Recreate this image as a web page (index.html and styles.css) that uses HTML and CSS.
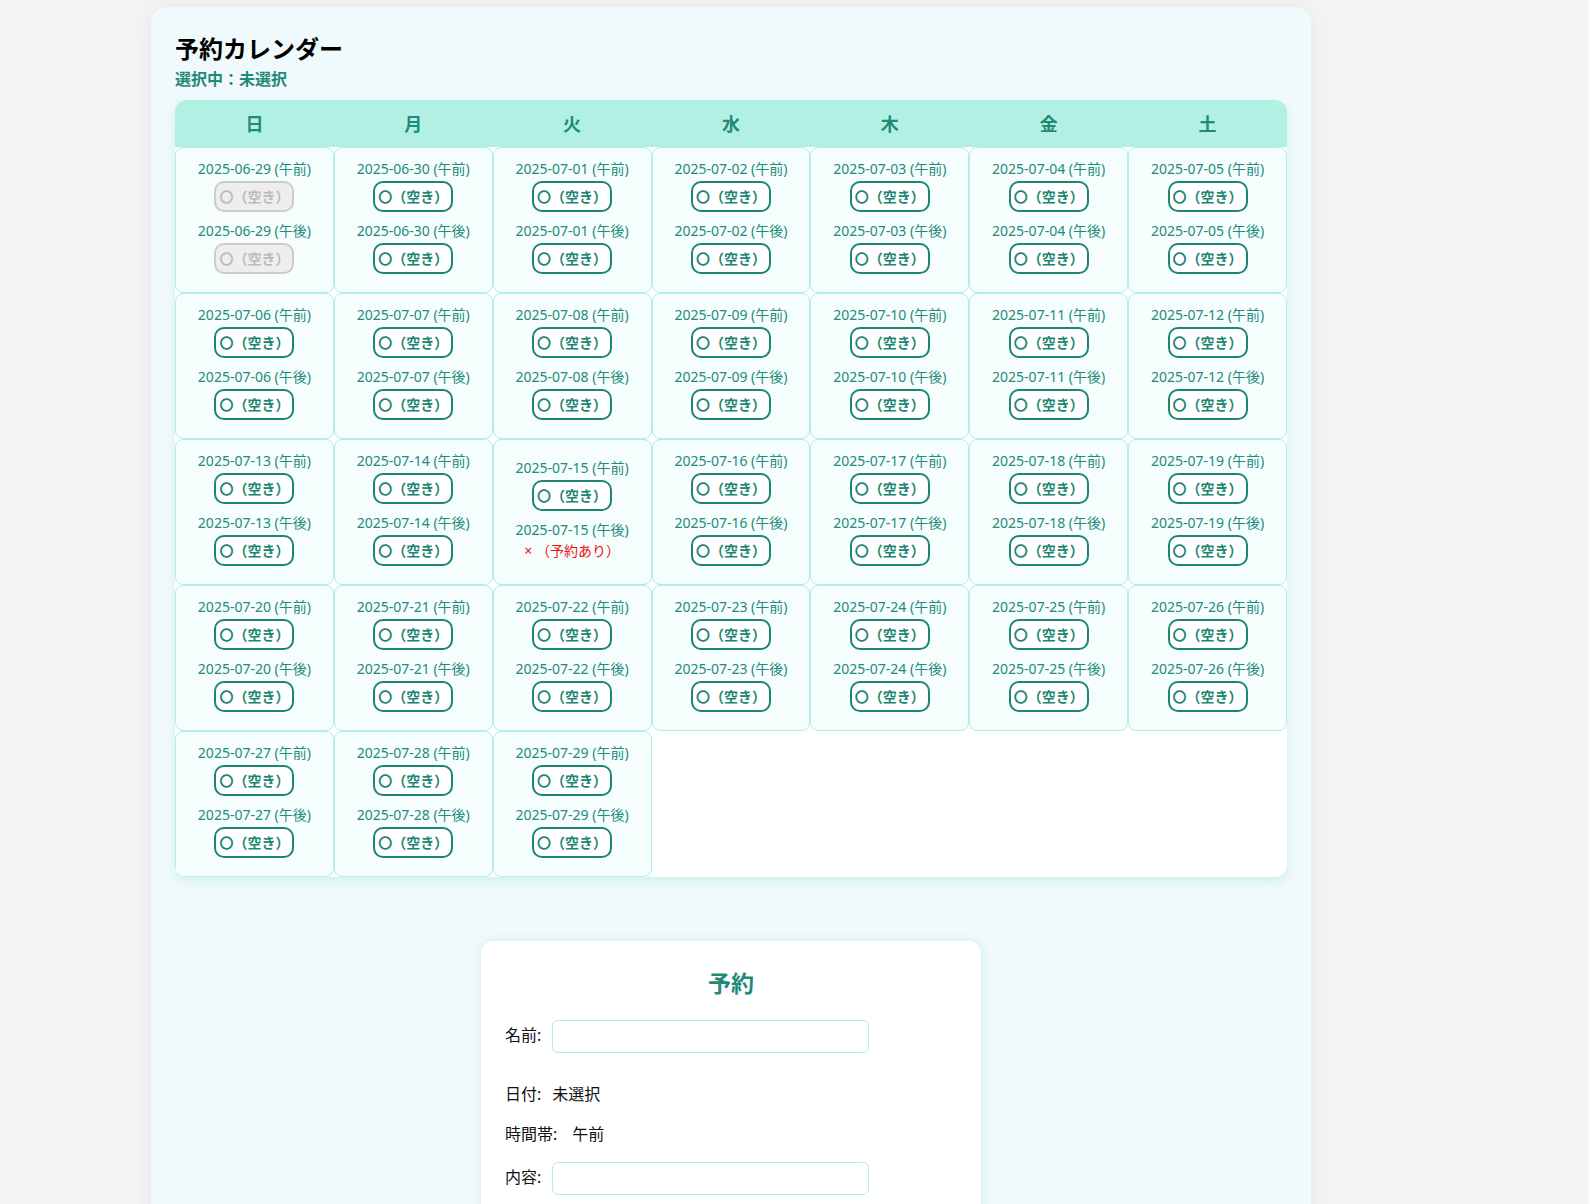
FILE: index.html
```html
<!DOCTYPE html>
<html lang="ja">
    <head>
        <meta charset="utf-8" />
        <title>予約カレンダー</title>
        <link rel="stylesheet" href="styles.css">
        <script type="text/javascript">
            var dayNames = ["日", "月", "火", "水", "木", "金", "土"];
            var bookedSlots = ["2025-07-15_午後"];
            var pastUntil = "2025-06-29";

            function pad(n) {
                return (n < 10 ? "0" : "") + n;
            }

            function formatDate(d) {
                return d.getFullYear() + "-" + pad(d.getMonth() + 1) + "-" + pad(d.getDate());
            }

            // Build one slot (date label + button or booked mark)
            function createSlot(dateStr, period) {
                var slot = document.createElement("div");
                slot.setAttribute("class", "slot");

                var label = document.createElement("div");
                label.setAttribute("class", "slotDate");
                label.appendChild(document.createTextNode(dateStr + " (" + period + ")"));
                slot.appendChild(label);

                if (bookedSlots.indexOf(dateStr + "_" + period) >= 0) {
                    var booked = document.createElement("div");
                    booked.setAttribute("class", "booked");
                    booked.appendChild(document.createTextNode("× （予約あり）"));
                    slot.appendChild(booked);
                } else {
                    var btn = document.createElement("button");
                    btn.setAttribute("type", "button");
                    btn.setAttribute("class", dateStr <= pastUntil ? "slotBtn disabled" : "slotBtn");
                    btn.appendChild(document.createTextNode("〇（空き）"));
                    slot.appendChild(btn);
                }
                return slot;
            }

            function buildCalendar() {
                var head = document.getElementById("calHead");
                var headRow = document.createElement("tr");
                for (var i = 0; i < dayNames.length; i++) {
                    var th = document.createElement("th");
                    th.appendChild(document.createTextNode(dayNames[i]));
                    headRow.appendChild(th);
                }
                head.appendChild(headRow);

                var body = document.getElementById("calBody");
                var day = new Date(2025, 5, 29);
                var row = null;
                for (var n = 0; n < 31; n++) {
                    if (n % 7 == 0) {
                        row = document.createElement("tr");
                        body.appendChild(row);
                    }
                    var dateStr = formatDate(day);
                    var td = document.createElement("td");
                    td.appendChild(createSlot(dateStr, "午前"));
                    td.appendChild(createSlot(dateStr, "午後"));
                    row.appendChild(td);
                    day.setDate(day.getDate() + 1);
                }
            }

            window.addEventListener("load", buildCalendar);
        </script>
    </head>
    <body>
        <div id="page">
            <h1 class="title">予約カレンダー</h1>
            <div class="selected">選択中：未選択</div>
            <table class="calendar">
                <thead id="calHead"></thead>
                <tbody id="calBody"></tbody>
            </table>

            <div class="formCard">
                <h2 class="formTitle">予約</h2>
                <div class="formRow nameRow">
                    <label class="formLabel">名前:</label><input type="text" class="formInput" />
                </div>
                <div class="formRow">
                    <span class="formLabel">日付:</span><span class="formValue">未選択</span>
                </div>
                <div class="formRow">
                    <span class="formLabel">時間帯:</span><span class="formValue timeValue">午前</span>
                </div>
                <div class="formRow">
                    <label class="formLabel">内容:</label><input type="text" class="formInput" />
                </div>
            </div>
        </div>
    </body>
</html>
```
FILE: styles.css
```css
body {
    margin: 0;
    background-color: #f4f4f4;
    font-family: "Noto Sans", "Noto Sans CJK JP", sans-serif;
    color: #111;
}
#page {
    width: 1112px;
    margin: 7px 0 0 151px;
    padding: 24px 24px 60px 24px;
    background-color: #f0f9fb;
    border-radius: 16px;
    box-shadow: 0 0 24px rgba(0, 0, 0, 0.06);
}
.title {
    margin: 0;
    font-size: 24px;
    line-height: 36px;
    font-weight: bold;
    color: #000;
}
.selected {
    margin-bottom: 9px;
    font-size: 16px;
    line-height: 24px;
    font-weight: bold;
    color: #1f8a78;
}
.calendar {
    width: 100%;
    table-layout: fixed;
    border-collapse: separate;
    border-spacing: 0;
    background-color: #ffffff;
    border-radius: 12px;
    overflow: hidden;
    box-shadow: 0 4px 10px rgba(40, 190, 165, 0.15);
}
.calendar th {
    padding: 13px 0 11px 0;
    background-color: #b2f0e4;
    color: #1f8a78;
    font-size: 18px;
    line-height: 23px;
    font-weight: bold;
}
.calendar td {
    padding: 10px 4px 10px 4px;
    background-color: #f5fdfd;
    border: 1px solid #b3ede3;
    border-radius: 8px;
    text-align: center;
    vertical-align: middle;
}
.slot {
    margin-bottom: 8px;
}
.slotDate {
    font-size: 14px;
    line-height: 21px;
    color: #238b7b;
}
.slotBtn {
    display: inline-block;
    margin-top: 2px;
    padding: 4px 3px;
    font-family: "Noto Sans", "Noto Sans CJK JP", sans-serif;
    font-size: 14px;
    line-height: 19px;
    font-weight: bold;
    color: #1d8672;
    background-color: #ffffff;
    border: 2px solid #1d8672;
    border-radius: 10px;
    cursor: pointer;
}
.slotBtn.disabled {
    color: #bbbbbb;
    background-color: #eeeeee;
    border-color: #cccccc;
    cursor: default;
}
.booked {
    margin-top: 2px;
    font-size: 14px;
    line-height: 17px;
    color: #ee1111;
}
.formCard {
    width: 452px;
    margin: 64px auto 0 auto;
    padding: 24px;
    background-color: #ffffff;
    border-radius: 12px;
    box-shadow: 0 0 10px rgba(40, 200, 180, 0.18);
}
.formTitle {
    margin: 2px 0 20px 0;
    text-align: center;
    font-size: 23px;
    line-height: 33px;
    font-weight: bold;
    color: #1f8a78;
}
.formRow {
    font-size: 16px;
    line-height: 24px;
    margin-bottom: 16px;
}
.nameRow {
    margin-bottom: 29px;
}
.formLabel {
    margin-right: 11px;
}
.timeValue {
    margin-left: 4px;
}
.formInput {
    width: 317px;
    height: 33px;
    box-sizing: border-box;
    padding: 4px 6px;
    border: 1px solid #b3ede3;
    border-radius: 6px;
    font-size: 14px;
    vertical-align: middle;
}
```
